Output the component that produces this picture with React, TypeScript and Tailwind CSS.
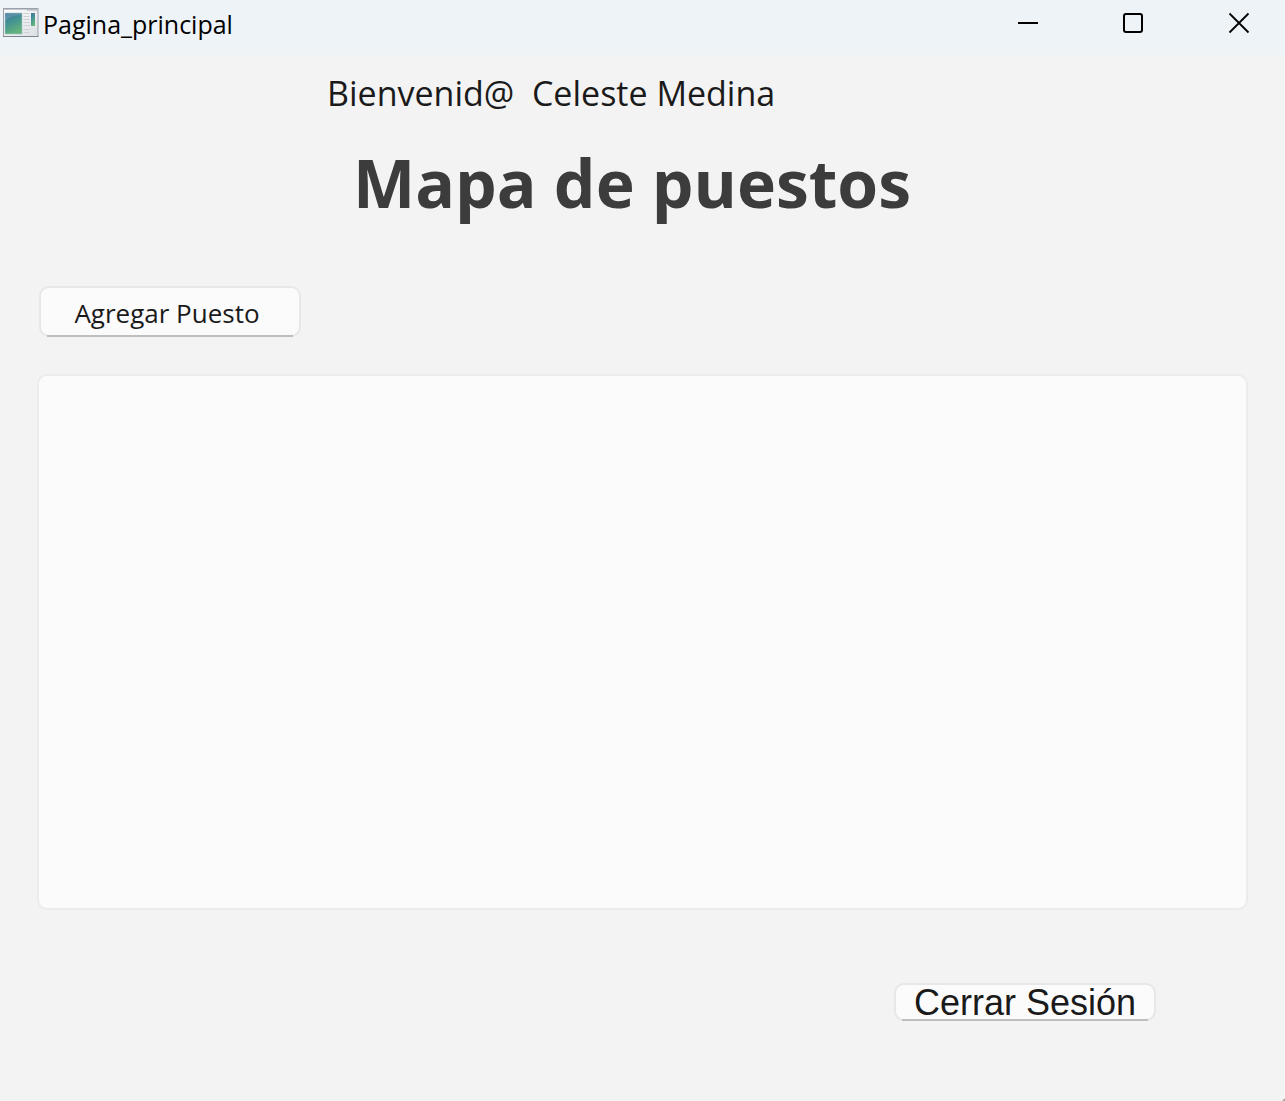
import type { ButtonHTMLAttributes, ReactNode } from 'react';

function AppIcon() {
  return (
    <svg viewBox="0 0 36 30" className="h-[30px] w-9 shrink-0" aria-hidden="true">
      <defs>
        <linearGradient id="pane" x1="0" y1="0" x2="0.4" y2="1">
          <stop offset="0" stopColor="#3f74a4" />
          <stop offset="0.5" stopColor="#459392" />
          <stop offset="1" stopColor="#62b37c" />
        </linearGradient>
        <linearGradient id="frame" x1="0" y1="0" x2="1" y2="1">
          <stop offset="0" stopColor="#ffffff" />
          <stop offset="1" stopColor="#dcdfe3" />
        </linearGradient>
      </defs>
      <rect x="0.5" y="0.5" width="34.500" height="28" fill="url(#frame)" stroke="#9aa1aa" />
      <path d="M0 28.500h35.500" stroke="#7d858e" />
      <path d="M1 1.500h33.500" stroke="#c4c8ce" />
      <path d="M24 2h10.500" stroke="#a9afb8" />
      <rect x="2" y="5" width="17" height="21" fill="url(#pane)" stroke="#a9c6cb" strokeWidth="0.6" />
      <path d="M2.500 13C7 8 13 7 18.500 7V5.500H2.500z" fill="#ffffff" opacity="0.12" />
      <path d="M20.500 5.500h6M20.500 8.500h6M20.500 11.500h6M20.500 14.500h6M20.500 17.500h6M20.500 21.500h6M20.500 24.500h6" stroke="#cdd0d4" />
      <rect x="28" y="5" width="4" height="13" fill="url(#pane)" />
    </svg>
  );
}

function CaptionButton({ label, children }: { label: string; children: ReactNode }) {
  return (
    <button type="button" aria-label={label} className="flex h-[46px] w-[106px] items-center justify-center hover:bg-black/5">
      <svg viewBox="0 0 22 22" className="size-[22px]" fill="none" stroke="#000000" strokeWidth="2" aria-hidden="true">
        {children}
      </svg>
    </button>
  );
}

function PushButton({ className, children, ...rest }: ButtonHTMLAttributes<HTMLButtonElement>) {
  return (
    <button
      type="button"
      className={`relative flex w-[262px] items-center justify-center rounded-[10px] border-2 border-[#e7e7e7] bg-[#fbfbfb] text-[#1a1a1a] after:absolute after:inset-x-1.5 after:-bottom-0.5 after:h-0.5 after:bg-[#bebebe] ${className}`}
      {...rest}
    >
      {children}
    </button>
  );
}

export default function App() {
  return (
    <div className="relative flex min-h-screen flex-col bg-[#f3f3f3] font-['Open_Sans','Noto_Sans',sans-serif] text-[#1a1a1a]">
      <header className="flex h-[55px] items-start justify-between overflow-hidden bg-[#eef3f8]">
        <div className="flex items-start gap-1 pt-2 pl-[3px]">
          <AppIcon />
          <span className="text-[25px] leading-8 text-black">Pagina_principal</span>
        </div>
        <div className="-mr-[7px] flex">
          <CaptionButton label="Minimizar">
            <path d="M2 11h20" />
          </CaptionButton>
          <CaptionButton label="Maximizar">
            <rect x="2" y="2" width="18" height="18" rx="2" />
          </CaptionButton>
          <CaptionButton label="Cerrar">
            <path d="M1.500 1.500l19 19M20.500 1.500l-19 19" strokeWidth="1.8" />
          </CaptionButton>
        </div>
      </header>
      <main className="flex flex-1 flex-col px-[37px] pb-20">
        <p className="mt-[13px] ml-[290px] text-[34px] leading-[50px] whitespace-pre">Bienvenid@  Celeste Medina</p>
        <h1 className="mt-[19px] ml-[316px] text-[66px] leading-[90px] font-bold whitespace-nowrap text-[#3c3c3c]">Mapa de puestos</h1>
        <PushButton className="mt-[59px] ml-0.5 h-[51px] pt-1 pr-1.5 text-[26px]">Agregar Puesto</PushButton>
        <section aria-label="Mapa de puestos" className="mt-[37px] min-h-60 flex-1 rounded-[10px] border-2 border-[#ececec] bg-[#fbfbfb]" />
        <PushButton className="mt-[73px] mr-[92px] h-[38px] self-end pt-0.5 font-['Liberation_Sans',Arial,sans-serif] text-[36px]">
          Cerrar Sesión
        </PushButton>
      </main>
      <svg viewBox="0 0 3 3" className="absolute right-0 bottom-0 size-[3px]" aria-hidden="true">
        <path d="M3 0v3H0z" fill="#a8a8a8" />
      </svg>
    </div>
  );
}
